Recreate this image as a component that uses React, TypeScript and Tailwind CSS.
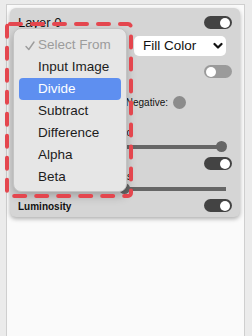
import React from 'react';

const Toggle = ({ on }: { on: boolean }) => (
  <div className={on ? 'w-[28px] h-[13px] rounded-full bg-[#434343] flex items-center justify-end px-[2px]' : 'w-[28px] h-[13px] rounded-full bg-[#9b9b9b] flex items-center justify-start px-[2px]'}>
    <div className="w-[10px] h-[10px] rounded-full bg-white" />
  </div>
);

const Slider = ({ pos }: { pos: number }) => (
  <div className="relative h-[10px] mr-[6px] flex items-center">
    <div className="w-full h-[4px] bg-[#666666]" />
    <div className="absolute top-[-1px] w-[11px] h-[11px] rounded-full bg-[#666666]" style={{ left: pos }} />
  </div>
);

const items = ['Input Image', 'Divide', 'Subtract', 'Difference', 'Alpha', 'Beta'];

export default function App() {
  return (
    <div className="w-[252px] h-[336px] bg-[#ebebeb] pl-[6px] pt-[4px] overflow-hidden relative" style={{ fontFamily: '"Liberation Sans", Arial, sans-serif' }}>
      <div className="w-[239px] h-[340px] bg-[#fafafa] border-x border-t border-[#cfcfcf] pt-[3px] pl-[3px]">
        <div className="w-[230px] bg-[#d5d5d5] rounded-[6px] shadow-[0_2px_4px_rgba(0,0,0,0.3)] pt-[8px] pb-[5px] pl-[8px] pr-[8px] text-[#111]">
          <div className="h-[13px] flex items-center justify-between">
            <span className="text-[13px] leading-none">Layer 0</span>
            <Toggle on />
          </div>
          <div className="mt-[7px] h-[20px] flex justify-end">
            <div className="w-[92px] h-[20px] bg-white rounded-[5px] mr-[6px] flex items-center justify-between pl-[9px] pr-[3px]">
              <span className="text-[13.5px] leading-none">Fill Color</span>
              <svg width="10" height="8" viewBox="0 0 10 8"><polyline points="1.5,2 5,5.5 8.5,2" fill="none" stroke="#111" strokeWidth="2.2" strokeLinecap="round" strokeLinejoin="round" /></svg>
            </div>
          </div>
          <div className="mt-[9px] h-[13px] flex items-center justify-end">
            <Toggle on={false} />
          </div>
          <div className="mt-[18px] h-[13px] flex items-center">
            <span className="w-[150px] text-right text-[10px] leading-none">Negative:</span>
            <div className="ml-[5px] w-[13px] h-[13px] rounded-full bg-[#8c8c8c]" />
          </div>
          <div className="mt-[18px] h-[12px] flex items-center">
            <span className="w-[114px] text-right text-[10px] leading-none">Ratio</span>
          </div>
          <div className="mt-[3px]">
            <Slider pos={198} />
          </div>
          <div className="mt-[5px] h-[13px] flex items-center justify-end">
            <Toggle on />
          </div>
          <div className="mt-[1px] h-[12px] flex items-center">
            <span className="w-[114px] text-right text-[10px] leading-none">Bias</span>
          </div>
          <div className="mt-[1px]">
            <Slider pos={101} />
          </div>
          <div className="mt-[5px] h-[13px] flex items-center justify-between">
            <span className="text-[10px] font-bold leading-none pt-[2px]">Luminosity</span>
            <Toggle on />
          </div>
        </div>
      </div>

      <div className="absolute left-[13px] top-[28px] w-[114px] h-[164px] rounded-[8px] bg-[#e6e6e6] border border-[#c4c4c4] shadow-[0_4px_10px_rgba(0,0,0,0.25)] pt-[5px] px-[5px] text-[13.5px] leading-none">
        <div className="h-[22px] flex items-center text-[#9c9c9c]">
          <svg className="ml-[6px] mt-[1px]" width="10" height="10" viewBox="0 0 10 10"><polyline points="1,5.5 3.8,8.5 9,1" fill="none" stroke="#9c9c9c" strokeWidth="1.4" strokeLinecap="round" strokeLinejoin="round" /></svg>
          <span className="ml-[3px]">Select From</span>
        </div>
        {items.map((t) => (
          <div key={t} className={t === 'Divide' ? 'h-[22px] flex items-center rounded-[4px] bg-[#5e8ff0] text-white pl-[19px]' : 'h-[22px] flex items-center text-[#1c1c1c] pl-[19px]'}>
            {t}
          </div>
        ))}
      </div>

      <svg className="absolute left-0 top-0" width="252" height="336">
        <rect x="7" y="24" width="124" height="172" rx="3" fill="none" stroke="#e4464e" strokeWidth="4" strokeDasharray="11 11" strokeLinecap="round" />
      </svg>
    </div>
  );
}
